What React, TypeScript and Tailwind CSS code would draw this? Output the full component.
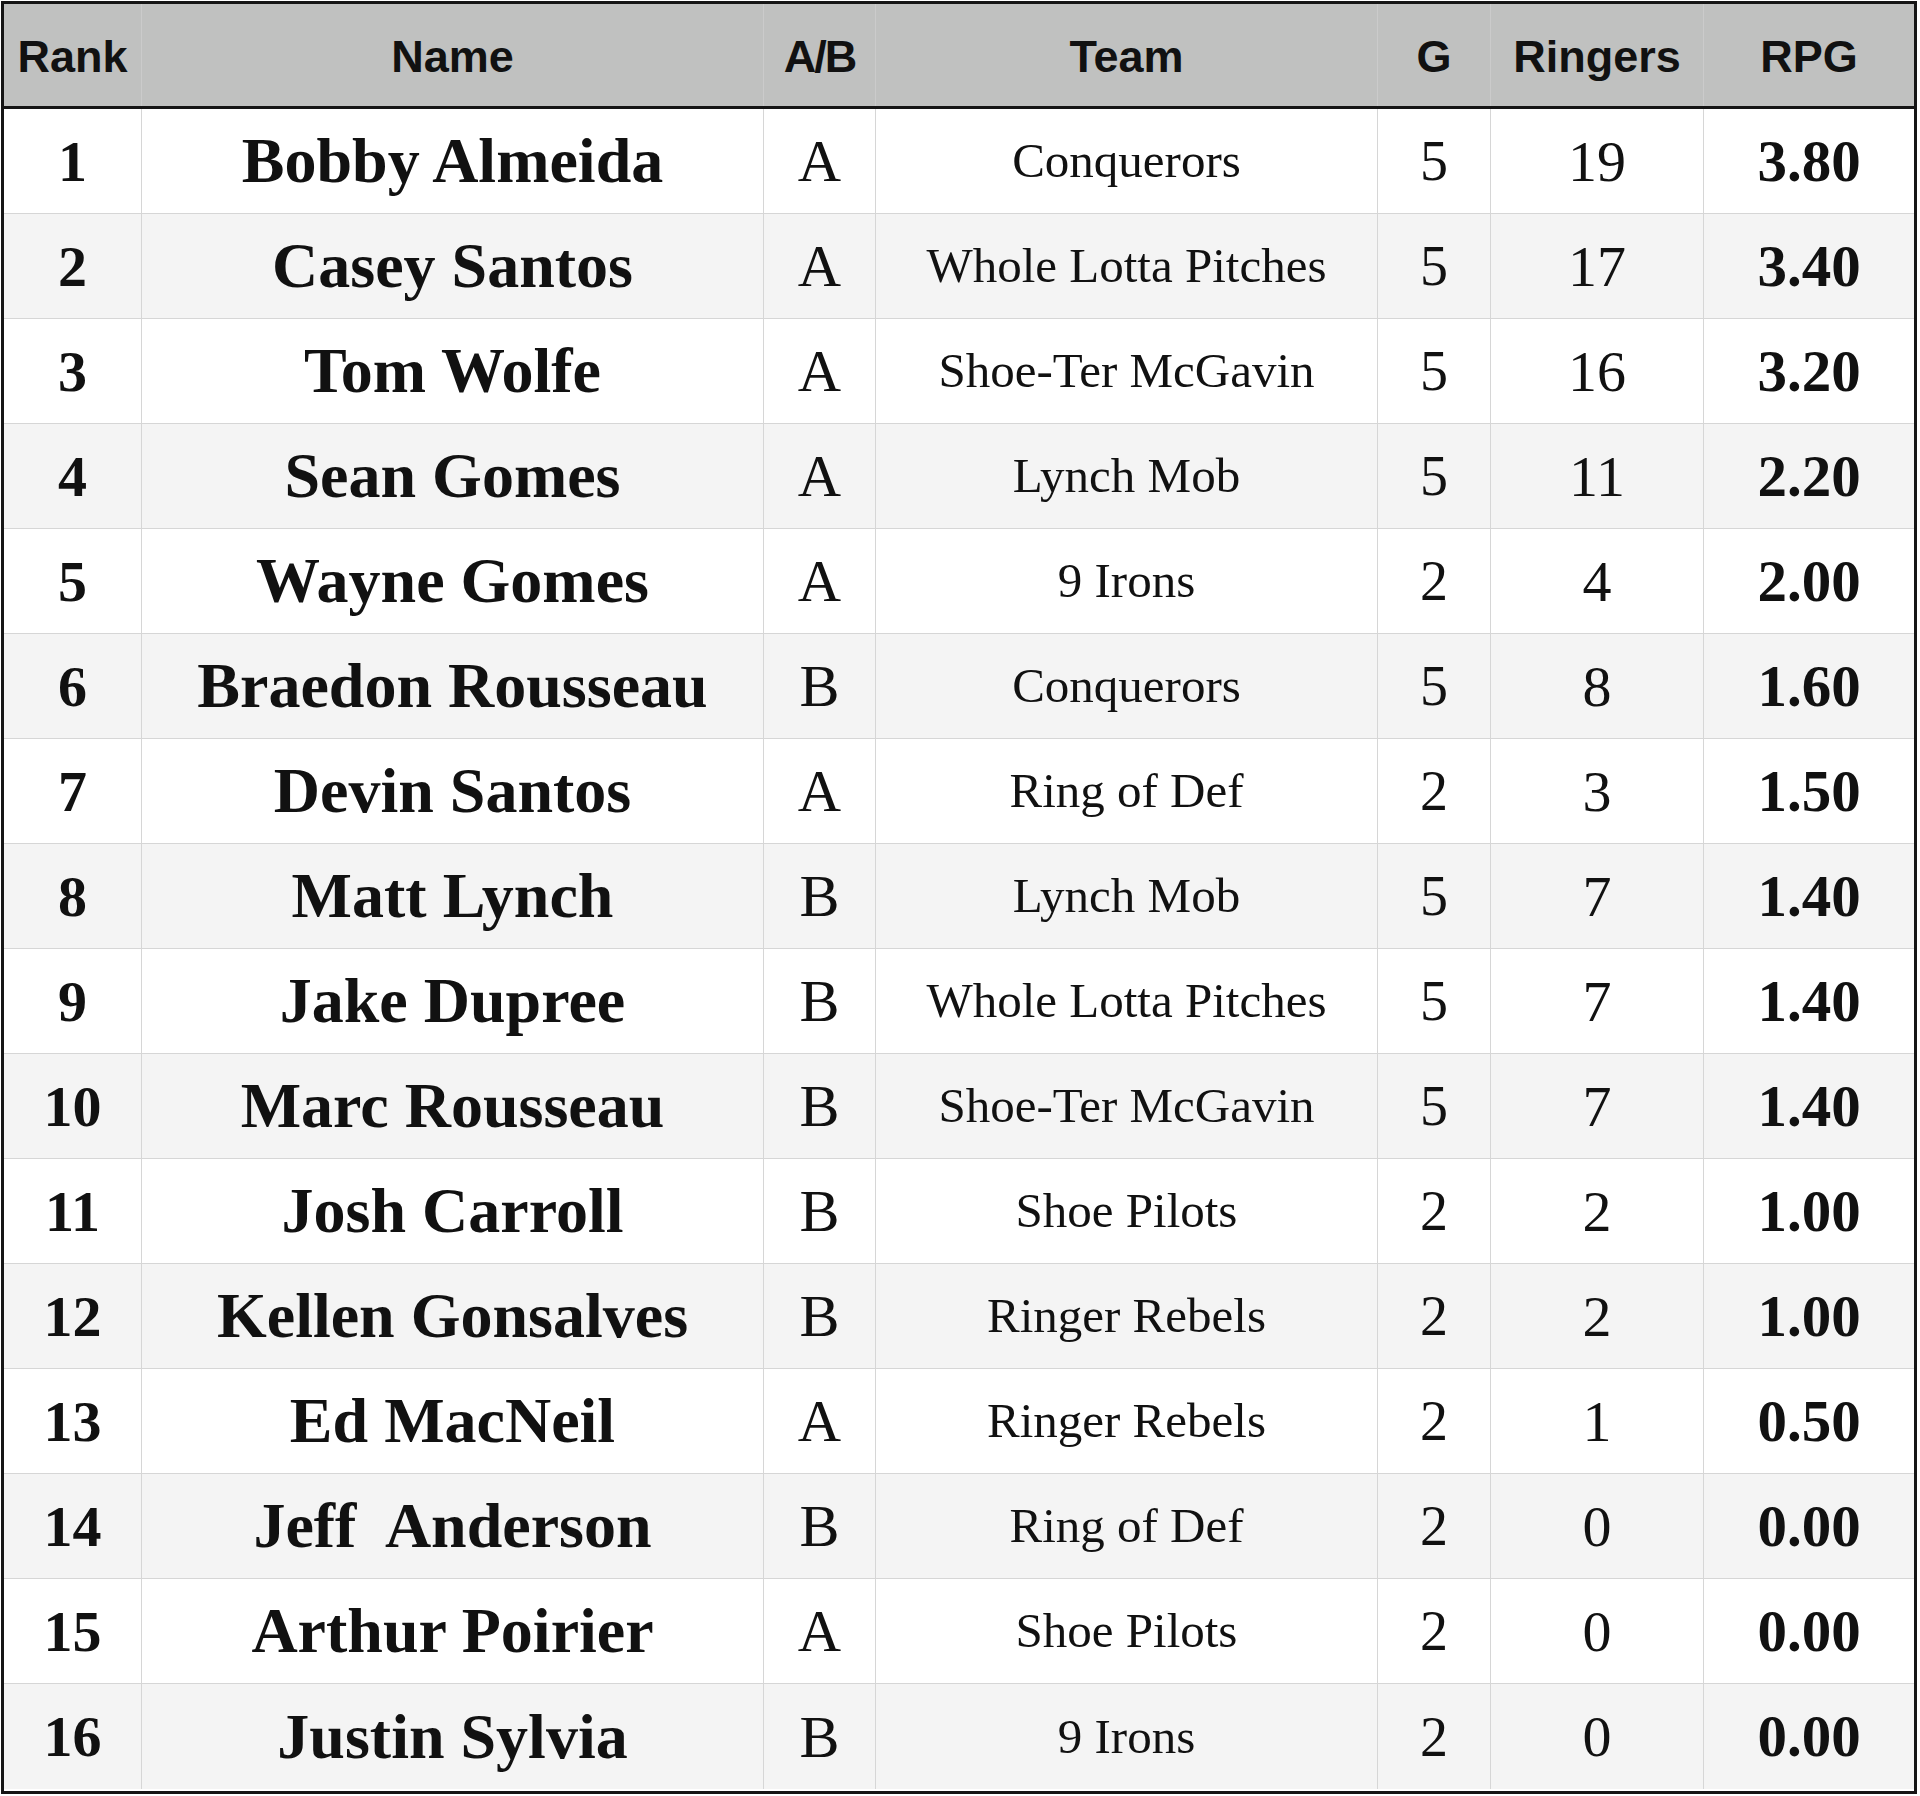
import React from "react";

type Row = { rank: number; name: string; ab: string; team: string; g: number; ringers: number; rpg: string };

const rows: Row[] = [
  { rank: 1, name: "Bobby Almeida", ab: "A", team: "Conquerors", g: 5, ringers: 19, rpg: "3.80" },
  { rank: 2, name: "Casey Santos", ab: "A", team: "Whole Lotta Pitches", g: 5, ringers: 17, rpg: "3.40" },
  { rank: 3, name: "Tom Wolfe", ab: "A", team: "Shoe-Ter McGavin", g: 5, ringers: 16, rpg: "3.20" },
  { rank: 4, name: "Sean Gomes", ab: "A", team: "Lynch Mob", g: 5, ringers: 11, rpg: "2.20" },
  { rank: 5, name: "Wayne Gomes", ab: "A", team: "9 Irons", g: 2, ringers: 4, rpg: "2.00" },
  { rank: 6, name: "Braedon Rousseau", ab: "B", team: "Conquerors", g: 5, ringers: 8, rpg: "1.60" },
  { rank: 7, name: "Devin Santos", ab: "A", team: "Ring of Def", g: 2, ringers: 3, rpg: "1.50" },
  { rank: 8, name: "Matt Lynch", ab: "B", team: "Lynch Mob", g: 5, ringers: 7, rpg: "1.40" },
  { rank: 9, name: "Jake Dupree", ab: "B", team: "Whole Lotta Pitches", g: 5, ringers: 7, rpg: "1.40" },
  { rank: 10, name: "Marc Rousseau", ab: "B", team: "Shoe-Ter McGavin", g: 5, ringers: 7, rpg: "1.40" },
  { rank: 11, name: "Josh Carroll", ab: "B", team: "Shoe Pilots", g: 2, ringers: 2, rpg: "1.00" },
  { rank: 12, name: "Kellen Gonsalves", ab: "B", team: "Ringer Rebels", g: 2, ringers: 2, rpg: "1.00" },
  { rank: 13, name: "Ed MacNeil", ab: "A", team: "Ringer Rebels", g: 2, ringers: 1, rpg: "0.50" },
  { rank: 14, name: "Jeff  Anderson", ab: "B", team: "Ring of Def", g: 2, ringers: 0, rpg: "0.00" },
  { rank: 15, name: "Arthur Poirier", ab: "A", team: "Shoe Pilots", g: 2, ringers: 0, rpg: "0.00" },
  { rank: 16, name: "Justin Sylvia", ab: "B", team: "9 Irons", g: 2, ringers: 0, rpg: "0.00" },
];

const serif = "font-['Liberation_Serif','Times_New_Roman',serif]";
const sans = "font-['Liberation_Sans',Arial,sans-serif]";

export default function App() {
  return (
    <div className="w-[1920px] h-[1796px] bg-white p-[1px] pr-[3px]">
      <div className="w-[1916px] h-[1793px] border-[3px] border-[#151515] flex flex-col text-[#111]">
        <div className={`flex h-[105px] bg-[#c0c1c0] border-b-[3px] border-[#151515] ${sans} font-bold text-[45px]`}>
          <div className="w-[137px] flex items-center justify-center pt-[3px]">Rank</div>
          <div className="w-[622px] border-l border-[#cbcbcb] flex items-center justify-center pt-[3px]">Name</div>
          <div className="w-[112px] border-l border-[#cbcbcb] flex items-center justify-center pt-[3px] tracking-[-2px]">A/B</div>
          <div className="w-[502px] border-l border-[#cbcbcb] flex items-center justify-center pt-[3px]">Team</div>
          <div className="w-[113px] border-l border-[#cbcbcb] flex items-center justify-center pt-[3px]">G</div>
          <div className="w-[213px] border-l border-[#cbcbcb] flex items-center justify-center pt-[3px]">Ringers</div>
          <div className="w-[211px] border-l border-[#cbcbcb] flex items-center justify-center pt-[3px]">RPG</div>
        </div>
        {rows.map((r, i) => (
          <div
            key={r.rank}
            className={`flex h-[105px] ${i % 2 === 1 ? "bg-[#f4f4f4]" : "bg-white"} ${i < rows.length - 1 ? "border-b border-[#d6d6d6]" : ""} ${serif}`}
          >
            <div className="w-[137px] flex items-center justify-center font-bold text-[58px]">{r.rank}</div>
            <div className="w-[622px] border-l border-[#d6d6d6] flex items-center justify-center font-bold text-[64px] whitespace-pre">{r.name}</div>
            <div className="w-[112px] border-l border-[#d6d6d6] flex items-center justify-center text-[60px]">{r.ab}</div>
            <div className="w-[502px] border-l border-[#d6d6d6] flex items-center justify-center text-[49px]">{r.team}</div>
            <div className="w-[113px] border-l border-[#d6d6d6] flex items-center justify-center text-[56px]">{r.g}</div>
            <div className="w-[213px] border-l border-[#d6d6d6] flex items-center justify-center text-[58px]">{r.ringers}</div>
            <div className="w-[211px] border-l border-[#d6d6d6] flex items-center justify-center font-bold text-[59px]">{r.rpg}</div>
          </div>
        ))}
      </div>
    </div>
  );
}
